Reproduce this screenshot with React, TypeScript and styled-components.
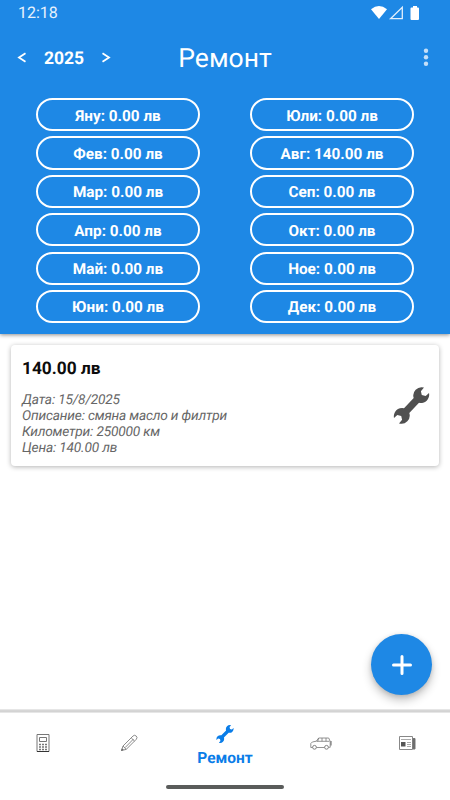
import React from "react";
import styled, { createGlobalStyle } from "styled-components";

const BLUE = "#1e88e5";

const GlobalStyle = createGlobalStyle`
  * { box-sizing: border-box; }
  body { margin: 0; background: #fff; font-family: Roboto, "Noto Sans", sans-serif; text-rendering: geometricPrecision; }
  svg { display: block; }
`;

const Screen = styled.div`
  width: 450px;
  height: 800px;
  display: flex;
  flex-direction: column;
  background: #fff;
  overflow: hidden;
  position: relative;
`;

const Header = styled.header`
  height: 334px;
  flex: none;
  background: ${BLUE};
  color: #fff;
  box-shadow: 0 1px 4px rgba(0, 0, 0, 0.45);
`;

const StatusBar = styled.div`
  height: 26px;
  padding: 0 31px 0 18px;
  display: flex;
  align-items: center;
  justify-content: space-between;
`;

const Clock = styled.span`
  font-size: 16px;
  line-height: 26px;
  color: #e6f1fc;
`;

const StatusIcons = styled.svg`
  width: 48px;
  height: 16px;
`;

const Toolbar = styled.div`
  height: 64px;
  display: grid;
  grid-template-columns: 125px 200px 1fr;
  align-items: center;
`;

const YearPicker = styled.div`
  display: flex;
  align-items: center;
  padding-left: 17px;
`;

const Chevron = styled.svg`
  width: 10px;
  height: 12px;
  fill: none;
  stroke: #fff;
  stroke-width: 1.8;
`;

const Year = styled.span`
  width: 74px;
  padding-top: 1px;
  text-align: center;
  font-size: 17.5px;
  line-height: 22px;
  font-weight: 700;
`;

const Title = styled.h1`
  margin: 0;
  padding-top: 2px;
  text-align: center;
  font-size: 26.5px;
  line-height: 32px;
  font-weight: 400;
`;

const MenuDots = styled.svg`
  width: 6px;
  height: 20px;
  justify-self: end;
  margin-right: 21px;
  fill: #c5dff8;
`;

const Months = styled.div`
  display: grid;
  grid-template-columns: 164px 164px;
  grid-template-rows: repeat(6, 33.2px);
  grid-auto-flow: column;
  column-gap: 50px;
  row-gap: 5.2px;
  padding: 8px 36px 0;
`;

const MonthPill = styled.div`
  border: 2px solid #fff;
  border-radius: 17px;
  display: flex;
  align-items: center;
  justify-content: center;
  padding-top: 2px;
  font-size: 15.3px;
  font-weight: 700;
`;

const Content = styled.main`
  flex: 1;
  padding: 11px 11px 0;
`;

const Card = styled.article`
  height: 121px;
  padding: 14px 9px 0 11px;
  border-radius: 4px;
  background: #fff;
  box-shadow: 0 1px 5px rgba(0, 0, 0, 0.3);
  display: flex;
  justify-content: space-between;
`;

const Amount = styled.div`
  font-size: 17.3px;
  line-height: 21px;
  font-weight: 700;
  color: #0c0c0c;
  margin-bottom: 12px;
`;

const Detail = styled.div`
  font-size: 13.7px;
  line-height: 16px;
  letter-spacing: -0.17px;
  font-style: italic;
  color: #666;
`;

const CardIcon = styled.div`
  padding-top: 28px;
`;

const Fab = styled.button`
  position: absolute;
  left: 371px;
  top: 634px;
  width: 61px;
  height: 61px;
  border: 0;
  padding: 0;
  border-radius: 50%;
  background: ${BLUE};
  box-shadow: 0 5px 10px rgba(0, 0, 0, 0.24), 0 1px 4px rgba(0, 0, 0, 0.12);
  display: flex;
  align-items: center;
  justify-content: center;
`;

const BottomBar = styled.footer`
  height: 91px;
  flex: none;
  background: linear-gradient(#eeeeee, #cecece 2px, #d8d8d8 3px, #f4f4f4 4px, #fff 4px);
  padding-top: 4px;
  display: flex;
  flex-direction: column;
  align-items: center;
`;

const Tabs = styled.nav`
  width: 100%;
  height: 72px;
  display: grid;
  grid-template-columns: 86px 86px 106px 86px 86px;
`;

const Tab = styled.div<{ $active?: boolean }>`
  display: flex;
  flex-direction: column;
  align-items: center;
  padding-top: ${(p) => (p.$active ? 12 : 20)}px;
  color: ${(p) => (p.$active ? "#0a7de8" : "#555")};
`;

const TabLabel = styled.span`
  margin-top: 6px;
  font-size: 15.5px;
  line-height: 18px;
  font-weight: 700;
  white-space: nowrap;
`;

const TabIcon = styled.svg`
  width: 22px;
  height: 20px;
  fill: none;
  stroke: #777;
  stroke-width: 1;
`;

const HomeHandle = styled.div`
  width: 118px;
  height: 4px;
  border-radius: 2px;
  background: #5a5c5b;
`;

const Wrench = ({ size, color }: { size: number; color: string }) => (
  <svg width={size} height={size} viewBox="0 0 36 37" fill={color}>
    <path d="M30.5.6 27.400 4.200l.9 3.900 3.900 1L35.500 6A8.300 8.300 0 0 1 25.500 15.800L15.800 25.900A8.300 8.300 0 0 1 5.500 36.400L8.600 32.800l-.9-3.900-3.900-1L.5 31A8.300 8.300 0 0 1 10.500 21.200L20.200 11.100A8.300 8.300 0 0 1 30.5.6Z" />
  </svg>
);

const months = [
  ["Яну", "0.00"], ["Фев", "0.00"], ["Мар", "0.00"], ["Апр", "0.00"], ["Май", "0.00"], ["Юни", "0.00"],
  ["Юли", "0.00"], ["Авг", "140.00"], ["Сеп", "0.00"], ["Окт", "0.00"], ["Ное", "0.00"], ["Дек", "0.00"],
];

const details = ["Дата: 15/8/2025", "Описание: смяна масло и филтри", "Километри: 250000 км", "Цена: 140.00 лв"];

export default function App() {
  return (
    <>
      <GlobalStyle />
      <Screen>
        <Header>
          <StatusBar>
            <Clock>12:18</Clock>
            <StatusIcons viewBox="0 0 48 16" fill="#fff">
              <path d="M0 4.200Q8-2.300 16 4.200L8 14Z" />
              <path d="M19.500 13.700 31.300 2.200v11.500Z" fill="none" stroke="#e2effc" strokeWidth="1.300" />
              <path d="M42 1h4v1.400h1q1 0 1 1V14q0 1-1 1h-6.500q-1 0-1-1V3.400q0-1 1-1H42Z" />
            </StatusIcons>
          </StatusBar>
          <Toolbar>
            <YearPicker>
              <Chevron viewBox="0 0 10 12"><path d="M8.500 1.300 2 5.500l6.500 4.200" /></Chevron>
              <Year>2025</Year>
              <Chevron viewBox="0 0 10 12"><path d="M1.500 1.300 8 5.500l-6.500 4.200" /></Chevron>
            </YearPicker>
            <Title>Ремонт</Title>
            <MenuDots viewBox="0 0 6 20">
              <circle cx="3" cy="2.700" r="2.200" />
              <circle cx="3" cy="9.200" r="2.200" />
              <circle cx="3" cy="15.700" r="2.200" />
            </MenuDots>
          </Toolbar>
          <Months>
            {months.map(([name, sum]) => (
              <MonthPill key={name}>{name}: {sum} лв</MonthPill>
            ))}
          </Months>
        </Header>
        <Content>
          <Card>
            <div>
              <Amount>140.00 лв</Amount>
              {details.map((d) => <Detail key={d}>{d}</Detail>)}
            </div>
            <CardIcon><Wrench size={37} color="#505050" /></CardIcon>
          </Card>
        </Content>
        <BottomBar>
          <Tabs>
            <Tab>
              <TabIcon viewBox="0 0 22 20">
                <path d="M5 1.500h12v17H5Z" />
                <path d="M5 18.500h12" stroke="#333" />
                <path d="M7.500 4.500h7v4h-7Z" />
                <path d="M7 11.500h8M7 14h8M7 16.500h8" strokeWidth="1.300" strokeDasharray="2 1" />
              </TabIcon>
            </Tab>
            <Tab>
              <TabIcon viewBox="0 0 22 20">
                <path d="M3.500 17.500 5 13 15 3q1.500-1.500 3.200 0t0 3.400L8.200 16.400ZM5 13l3.200 3.400M13.200 4.800l3.300 3.300M7 14.700 15.500 6" strokeWidth=".85" />
                <path d="m3.500 17.500.7-1.700 1 1Z" fill="#333" />
              </TabIcon>
            </Tab>
            <Tab $active>
              <Wrench size={18} color="#0a7de8" />
              <TabLabel>Ремонт</TabLabel>
            </Tab>
            <Tab>
              <TabIcon viewBox="0 0 22 20">
                <path d="M2.500 14.500H.8v-4L2.300 9l4-.8L8.700 5h10l1.500 3.300v6H18.500M6.500 14.500h8M6.500 8.300H19.500M12 5v3.300M16 5v3.300M8.700 5l-1 3.300" strokeWidth=".8" />
                <path d="M21 8v4.500" strokeWidth="1.200" />
                <circle cx="4.500" cy="14.300" r="1.900" strokeWidth=".9" />
                <circle cx="16.500" cy="14.300" r="1.900" strokeWidth=".9" />
              </TabIcon>
            </Tab>
            <Tab>
              <TabIcon viewBox="0 0 22 20">
                <path d="M3.500 3.500h13v13h-13Z" stroke="#888" />
                <path d="M17 5.500h2v10.500h-2Z" fill="#666" />
                <path d="M5 6.500h10M11 9.500h4M11 11.500h4M11 13.500h4" stroke="#aaa" />
                <path d="M5 9h4.500v4.500H5Z" fill="#555" stroke="none" />
              </TabIcon>
            </Tab>
          </Tabs>
          <HomeHandle />
        </BottomBar>
        <Fab aria-label="+">
          <svg width="20" height="20" viewBox="0 0 20 20" stroke="#fff" strokeWidth="3" strokeLinecap="round">
            <path d="M10 1.500v17M1.500 10h17" />
          </svg>
        </Fab>
      </Screen>
    </>
  );
}
